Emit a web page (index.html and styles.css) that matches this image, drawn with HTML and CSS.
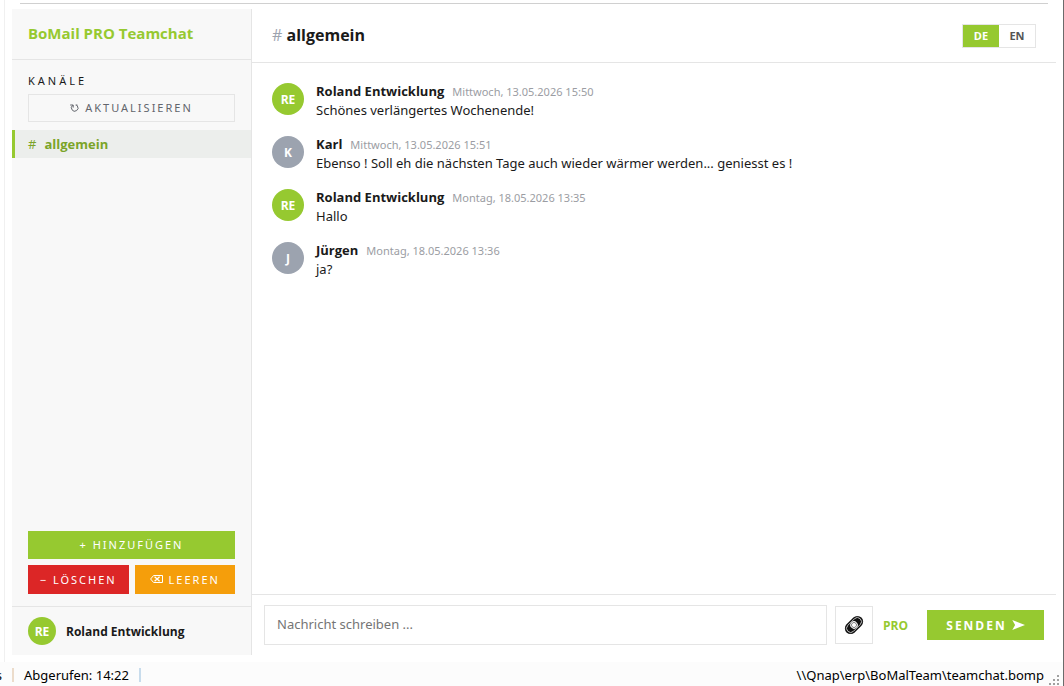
FILE: index.html
```html
<!DOCTYPE html>
<html lang="de">
<head>
    <meta charset="UTF-8">
    <meta name="viewport" content="width=device-width, initial-scale=1.0">
    <title>BoMail PRO Teamchat</title>
    <link rel="stylesheet" href="styles.css">
</head>
<body>

<div class="window">
    <div class="frame">
        <div class="app">

            <!-- Sidebar -->
            <aside class="sidebar">
                <h1 class="brand">BoMail PRO Teamchat</h1>

                <nav class="channels">
                    <h2 class="channels-title">KANÄLE</h2>
                    <button type="button" class="btn btn-refresh">
                        <svg width="9" height="9" viewBox="0 0 9 9" fill="none" stroke="currentColor">
                            <path d="M2.8 2.2A3.3 3.3 0 1 0 7.4 3L6.4 2"/>
                            <path d="M.2 2h3v2.6"/>
                            <path d="M5.6 2h1.8"/>
                        </svg>
                        AKTUALISIEREN
                    </button>
                    <a href="#allgemein" class="channel active"><span class="hash">#</span>allgemein</a>
                </nav>

                <div class="channel-actions">
                    <button type="button" class="btn btn-add">+ HINZUFÜGEN</button>
                    <button type="button" class="btn btn-delete">− LÖSCHEN</button>
                    <button type="button" class="btn btn-clear">
                        <svg width="13" height="8" viewBox="0 0 13 8" fill="none" stroke="currentColor">
                            <path d="M3.6.5h8.9v7H3.6L.6 4z"/>
                            <path d="M4.6 1.8l5 4.4M9.6 1.8l-5 4.4" stroke-width="1.3"/>
                        </svg>
                        LEEREN
                    </button>
                </div>

                <div class="user">
                    <span class="avatar avatar-small">RE</span>
                    <span class="user-name">Roland Entwicklung</span>
                </div>
            </aside>

            <!-- Chat -->
            <main class="chat">
                <header class="chat-header">
                    <h2 class="chat-title"><span class="hash">#</span> allgemein</h2>
                    <div class="lang">
                        <button type="button" class="lang-btn active">DE</button>
                        <button type="button" class="lang-btn">EN</button>
                    </div>
                </header>

                <div class="messages">
                    <article class="message">
                        <span class="avatar">RE</span>
                        <div>
                            <div class="meta"><span class="author">Roland Entwicklung</span><time>Mittwoch, 13.05.2026 15:50</time></div>
                            <p>Schönes verlängertes Wochenende!</p>
                        </div>
                    </article>
                    <article class="message">
                        <span class="avatar other">K</span>
                        <div>
                            <div class="meta"><span class="author">Karl</span><time>Mittwoch, 13.05.2026 15:51</time></div>
                            <p>Ebenso ! Soll eh die nächsten Tage auch wieder wärmer werden... geniesst es !</p>
                        </div>
                    </article>
                    <article class="message">
                        <span class="avatar">RE</span>
                        <div>
                            <div class="meta"><span class="author">Roland Entwicklung</span><time>Montag, 18.05.2026 13:35</time></div>
                            <p>Hallo</p>
                        </div>
                    </article>
                    <article class="message">
                        <span class="avatar other">J</span>
                        <div>
                            <div class="meta"><span class="author">Jürgen</span><time>Montag, 18.05.2026 13:36</time></div>
                            <p>ja?</p>
                        </div>
                    </article>
                </div>

                <form class="composer">
                    <input type="text" class="composer-input" placeholder="Nachricht schreiben ..." aria-label="Nachricht">
                    <button type="button" class="attach" aria-label="Datei anhängen">
                        <svg width="20" height="20" viewBox="0 0 20 20">
                            <g transform="rotate(-45 10 10)">
                                <rect x="-0.5" y="4.3" width="21" height="11.4" rx="5.7" fill="#111"/>
                                <rect x="1.2" y="5.9" width="17.6" height="8.2" rx="4.1" fill="none" stroke="#ddd" stroke-width="0.8"/>
                                <circle cx="10" cy="10" r="3.7" fill="#fff"/>
                                <circle cx="10" cy="10" r="2.5" fill="none" stroke="#555" stroke-width="0.7"/>
                            </g>
                        </svg>
                    </button>
                    <span class="pro">PRO</span>
                    <button type="button" class="send">
                        SENDEN
                        <svg width="13" height="10" viewBox="0 0 13 10" fill="currentColor">
                            <path d="M.3 0L13 5 .3 10l2.8-5z"/>
                        </svg>
                    </button>
                </form>
            </main>

        </div>
    </div>

    <footer class="statusbar">
        <span class="status-cut">s</span>
        <span class="sep warm"></span>
        <span>Abgerufen: 14:22</span>
        <span class="sep"></span>
        <span class="path">\\Qnap\erp\BoMalTeam\teamchat.bomp</span>
        <svg class="grip" width="11" height="11" viewBox="0 0 11 11" fill="#a0a0a0">
            <path d="M8 0h2v2H8zM4 4h2v2H4zM8 4h2v2H8zM0 8h2v2H0zM4 8h2v2H4zM8 8h2v2H8z"/>
        </svg>
    </footer>
</div>

</body>
</html>
```
FILE: styles.css
```css
* {
    box-sizing: border-box;
}

body {
    margin: 0;
    font-family: "Segoe UI", "Open Sans", "Noto Sans", sans-serif;
    font-size: 13px;
    color: #1a1a1a;
    background: #fff;
}

h1, h2, p {
    margin: 0;
}

button {
    font-family: inherit;
    cursor: pointer;
}

.window {
    display: flex;
    flex-direction: column;
    height: 100vh;
    border-right: 1px solid #6b6b6b;
}

.frame {
    flex: 1;
    display: flex;
    flex-direction: column;
    min-height: 0;
    margin-left: 4px;
    padding: 3px 7px 7px;
    border-left: 1px solid #f0f0f0;
}

/* line above the chat area */
.frame::before {
    content: "";
    height: 1px;
    margin: 0 8px 5px;
    background: #d0d0d0;
}

.app {
    flex: 1;
    display: flex;
    min-height: 0;
}

/* Sidebar */
.sidebar {
    display: flex;
    flex-direction: column;
    width: 240px;
    background: #f8f8f8;
    border-right: 1px solid #e5e5e5;
}

.brand {
    height: 51px;
    padding: 0 16px;
    border-bottom: 1px solid #e5e5e5;
    font-size: 15px;
    line-height: 49px;
    color: #96c930;
}

.channels {
    flex: 1;
    display: flex;
    flex-direction: column;
    padding-top: 12px;
}

.channels-title {
    margin: 0 16px 4px;
    font-family: "Segoe UI", "Noto Sans", sans-serif;
    font-size: 11px;
    font-weight: 400;
    line-height: 18px;
    letter-spacing: 3px;
}

.btn {
    display: flex;
    align-items: center;
    justify-content: center;
    gap: 6px;
    height: 28px;
    padding: 0 0 1px;
    border: none;
    font-family: "Segoe UI", "Noto Sans", sans-serif;
    font-size: 11px;
    letter-spacing: 2px;
    color: #fff;
}

.btn-refresh {
    margin: 0 16px 8px;
    border: 1px solid #e5e5e5;
    background: none;
    color: #62656c;
}

.channel {
    display: flex;
    gap: 8px;
    padding-left: 13px;
    border-left: 3px solid transparent;
    line-height: 28px;
    text-decoration: none;
    color: #6b7280;
}

.channel.active {
    border-left-color: #96c930;
    background: #eceeec;
    font-weight: 700;
    color: #7ba428;
}

.hash {
    font-weight: 400;
}

.channel-actions {
    display: grid;
    grid-template-columns: 1fr 1fr;
    gap: 6px;
    padding: 0 16px 12px;
}

.btn-add {
    grid-column: span 2;
    background: #96c930;
}

.btn-delete {
    height: 29px;
    background: #dc2626;
}

.btn-clear {
    height: 29px;
    background: #f59e0b;
}

.user {
    display: flex;
    align-items: center;
    gap: 10px;
    padding: 10px 16px;
    border-top: 1px solid #e5e5e5;
}

.user-name {
    font-size: 12px;
    font-weight: 700;
}

.avatar {
    display: flex;
    flex-shrink: 0;
    align-items: center;
    justify-content: center;
    width: 32px;
    height: 32px;
    border-radius: 50%;
    background: #96c930;
    font-size: 12px;
    font-weight: 700;
    color: #fff;
}

.avatar.other {
    background: #9ca3af;
}

.avatar-small {
    width: 28px;
    height: 28px;
}

/* Chat */
.chat {
    flex: 1;
    display: flex;
    flex-direction: column;
    min-width: 0;
}

.chat-header {
    display: flex;
    align-items: center;
    justify-content: space-between;
    height: 54px;
    padding: 0 20px;
    border-bottom: 1px solid #e5e5e5;
}

.chat-title {
    padding-bottom: 2px;
    font-size: 16px;
}

.chat-title .hash {
    color: #9ca3af;
}

.lang {
    display: flex;
    border: 1px solid #e5e5e5;
}

.lang-btn {
    min-width: 36px;
    height: 22px;
    padding: 0 10px;
    border: none;
    background: #fff;
    font-size: 11px;
    font-weight: 700;
    color: #555;
}

.lang-btn.active {
    background: #96c930;
    color: #fff;
}

.messages {
    flex: 1;
    display: flex;
    flex-direction: column;
    gap: 16px;
    padding: 20px;
    overflow: auto;
}

.message {
    display: flex;
    gap: 12px;
}

.meta {
    display: flex;
    align-items: baseline;
    gap: 8px;
    height: 18px;
    line-height: 16px;
}

.author {
    font-weight: 700;
}

.meta time {
    font-family: "Segoe UI", "Noto Sans", sans-serif;
    font-size: 11px;
    color: #9b9da3;
}

.message p {
    font-family: "Segoe UI", "Noto Sans", sans-serif;
    line-height: 19px;
}

.composer {
    display: flex;
    align-items: center;
    padding: 10px 12px;
    border-top: 1px solid #e5e5e5;
}

.composer-input {
    flex: 1;
    min-width: 0;
    height: 40px;
    padding: 0 12px 2px;
    border: 1px solid #e5e5e5;
    font-family: "Segoe UI", "Noto Sans", sans-serif;
    font-size: 13px;
}

.composer-input::placeholder {
    color: #757575;
}

.attach {
    display: flex;
    align-items: center;
    justify-content: center;
    width: 38px;
    height: 38px;
    margin: 0 10px 0 8px;
    padding: 0;
    border: 1px solid #e5e5e5;
    background: #fff;
}

.pro {
    width: 44px;
    font-size: 12px;
    font-weight: 700;
    color: #96c930;
}

.send {
    display: flex;
    align-items: center;
    justify-content: center;
    gap: 5px;
    width: 117px;
    height: 30px;
    padding: 0;
    border: none;
    background: #96c930;
    font-size: 12px;
    font-weight: 700;
    letter-spacing: 2px;
    color: #fff;
}

/* Status bar */
.statusbar {
    display: flex;
    align-items: center;
    gap: 10px;
    height: 24px;
    padding: 2px 3px 0 0;
    background: #fcfcfc;
    font-family: "Segoe UI", "Noto Sans", sans-serif;
    color: #000;
}

.status-cut {
    display: flex;
    justify-content: flex-end;
    width: 2px;
    overflow: hidden;
}

.sep {
    width: 2px;
    height: 14px;
    background: #c8dcec;
}

.sep.warm {
    background: #ecdccb;
}

.path {
    margin-left: auto;
}

.grip {
    align-self: flex-end;
    margin-left: -5px;
}
```
